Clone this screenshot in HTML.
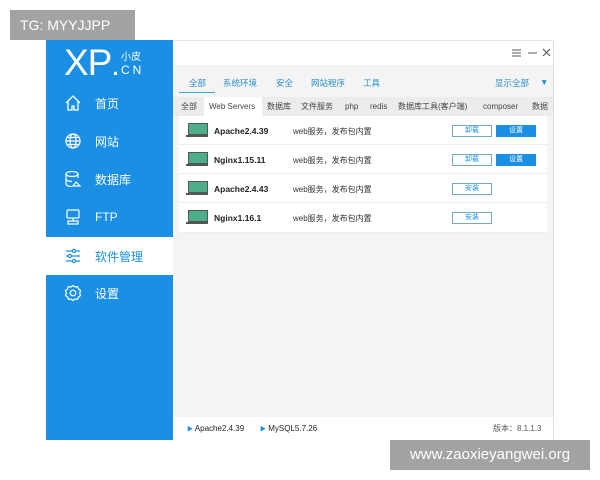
<!DOCTYPE html>
<html><head><meta charset="utf-8"><style>
*{margin:0;padding:0;box-sizing:border-box}
body{width:600px;height:480px;background:#fff;position:relative;overflow:hidden;font-family:"Liberation Sans","Noto Sans CJK SC",sans-serif}
.abs{position:absolute}
.wm{background:#a3a3a3;color:#fff;}
.side{left:46px;top:40px;width:127px;height:400px;background:#1a8fe3}
.item{position:absolute;left:0;width:127px;height:38px;color:#fff;font-size:12px;display:flex;align-items:center}
.item svg{position:absolute;left:18px}
.item span{position:absolute;left:49px}
.main{left:173px;top:40px;width:381px;height:400px;background:#f4f4f4;border-right:1px solid #ddd;border-top:1px solid #e6e6e6}
.row{position:absolute;left:6px;width:368px;height:29px;background:#fff;border-bottom:1px solid #eee;font-size:8px}
.ic{position:absolute;left:9px;top:7px;width:20px;height:12px;border:1.5px solid #555;background:#4caf8a}
.ic:after{content:"";position:absolute;left:-3px;top:11px;width:22px;height:1.5px;background:#555}
.nm{position:absolute;left:35px;top:10px;font-weight:bold;font-size:8.5px;color:#222}
.ds{position:absolute;left:114px;top:10px;color:#333}
.b1{position:absolute;left:273px;top:9px;width:40px;height:12px;border:1px solid #7ab;color:#1a8fe3;font-size:7px;text-align:center;line-height:10px;background:#fff}
.b2{position:absolute;left:317px;top:9px;width:40px;height:12px;background:#1a8fe3;color:#fff;font-size:7px;text-align:center;line-height:12px}
</style></head><body>
<div class="abs wm" style="left:10px;top:10px;width:125px;height:30px;font-size:14px;line-height:30px;padding-left:10px">TG: MYYJJPP</div>
<div class="abs side">
 <div class="abs" style="left:18px;top:3px;color:#fff;font-size:37px;line-height:40px;letter-spacing:-1px">XP<span style="font-size:30px">.</span></div>
 <div class="abs" style="left:75px;top:8px;color:#fff;font-size:10px">小皮</div>
 <div class="abs" style="left:75px;top:23px;color:#fff;font-size:12px;letter-spacing:3px">CN</div>
 <div class="item" style="top:44px"><svg width="18" height="18" viewBox="0 0 18 18" fill="none" stroke="#fff" stroke-width="1.3"><path d="M2 9L9 2l7 7M4 7v9h4v-4h2v4h4V7"/></svg><span>首页</span></div>
 <div class="item" style="top:82px"><svg width="18" height="18" viewBox="0 0 18 18" fill="none" stroke="#fff" stroke-width="1.2"><circle cx="9" cy="9" r="7"/><ellipse cx="9" cy="9" rx="3" ry="7"/><path d="M2 9h14M3 5.5h12M3 12.5h12"/></svg><span>网站</span></div>
 <div class="item" style="top:120px"><svg width="18" height="18" viewBox="0 0 18 18" fill="none" stroke="#fff" stroke-width="1.2"><ellipse cx="8" cy="4" rx="6" ry="2.5"/><path d="M2 4v10c0 1.4 3 2.5 6 2.5M14 4v4M2 9c0 1.4 3 2.5 6 2.5"/><path d="M9 16l3-4 4 4z"/></svg><span>数据库</span></div>
 <div class="item" style="top:158px"><svg width="18" height="18" viewBox="0 0 18 18" fill="none" stroke="#fff" stroke-width="1.2"><rect x="3" y="2" width="12" height="8" rx="1"/><path d="M9 10v3M4 13h10v3H4z"/></svg><span>FTP</span></div>
 <div class="item" style="top:197px;background:#fff;color:#1a8fe3"><svg width="18" height="18" viewBox="0 0 18 18" fill="none" stroke="#1a8fe3" stroke-width="1.2"><path d="M2 4h14M2 9h14M2 14h14"/><circle cx="10" cy="4" r="1.6" fill="#fff"/><circle cx="6" cy="9" r="1.6" fill="#fff"/><circle cx="10" cy="14" r="1.6" fill="#fff"/></svg><span>软件管理</span></div>
 <div class="item" style="top:234px"><svg width="18" height="18" viewBox="0 0 18 18" fill="none" stroke="#fff" stroke-width="1.2"><path d="M9 1.5l2 1.5 2.5-.3 1 2.3 2 1.5-.8 2.5.8 2.5-2 1.5-1 2.3-2.5-.3-2 1.5-2-1.5-2.5.3-1-2.3-2-1.5.8-2.5L1.5 6.5l2-1.5 1-2.3 2.5.3z"/><circle cx="9" cy="9" r="2.8"/></svg><span>设置</span></div>
</div>
<div class="abs main">
 <div class="abs" style="left:0;top:0;width:380px;height:24px;background:#fff"></div>
 <svg class="abs" style="left:338px;top:6px" width="40" height="12" viewBox="0 0 40 12" stroke="#555" stroke-width="1.1" fill="none"><path d="M1 3h9M1 6h9M1 9h9M17 6h9M32 2l7 7M39 2l-7 7"/></svg>
 <div class="abs" style="left:0;top:36px;width:380px;font-size:8.5px;color:#2a8fc9">
  <span class="abs" style="left:16px">全部</span><span class="abs" style="left:50px">系统环境</span><span class="abs" style="left:103px">安全</span><span class="abs" style="left:138px">网站程序</span><span class="abs" style="left:190px">工具</span><span class="abs" style="left:322px">显示全部</span><span class="abs" style="left:367px">▼</span>
 </div>
 <div class="abs" style="left:6px;top:51px;width:36px;height:1px;background:#4aa3d6"></div>
 <div class="abs" style="left:0;top:56px;width:380px;height:19px;background:#ececec;font-size:8px;color:#444;line-height:19px">
  <span class="abs" style="left:8px">全部</span>
  <span class="abs" style="left:31px;width:58px;background:#fff;padding-left:5px">Web Servers</span>
  <span class="abs" style="left:94px">数据库</span><span class="abs" style="left:128px">文件服务</span><span class="abs" style="left:172px">php</span><span class="abs" style="left:197px">redis</span><span class="abs" style="left:225px">数据库工具(客户端)</span><span class="abs" style="left:310px">composer</span><span class="abs" style="left:359px">数据</span>
 </div>
 <div class="row" style="top:75px"><div class="ic"></div><div class="nm">Apache2.4.39</div><div class="ds">web服务，发布包内置</div><div class="b1">卸载</div><div class="b2">设置</div></div>
 <div class="row" style="top:104px"><div class="ic"></div><div class="nm">Nginx1.15.11</div><div class="ds">web服务，发布包内置</div><div class="b1">卸载</div><div class="b2">设置</div></div>
 <div class="row" style="top:133px"><div class="ic"></div><div class="nm">Apache2.4.43</div><div class="ds">web服务，发布包内置</div><div class="b1">安装</div></div>
 <div class="row" style="top:162px;height:30px"><div class="ic"></div><div class="nm">Nginx1.16.1</div><div class="ds">web服务，发布包内置</div><div class="b1">安装</div></div>
 <div class="abs" style="left:0;top:376px;width:380px;height:24px;background:#fff;font-size:8px;color:#222;line-height:24px">
  <span class="abs" style="left:14px"><span style="color:#1a8fe3;font-size:6px">▶</span> Apache2.4.39</span>
  <span class="abs" style="left:87px"><span style="color:#1a8fe3;font-size:6px">▶</span> MySQL5.7.26</span>
  <span class="abs" style="left:320px;color:#555">版本：8.1.1.3</span>
 </div>
</div>
<div class="abs wm" style="left:390px;top:440px;width:200px;height:30px;font-size:15px;line-height:30px;text-align:center">www.zaoxieyangwei.org</div>
</body></html>
